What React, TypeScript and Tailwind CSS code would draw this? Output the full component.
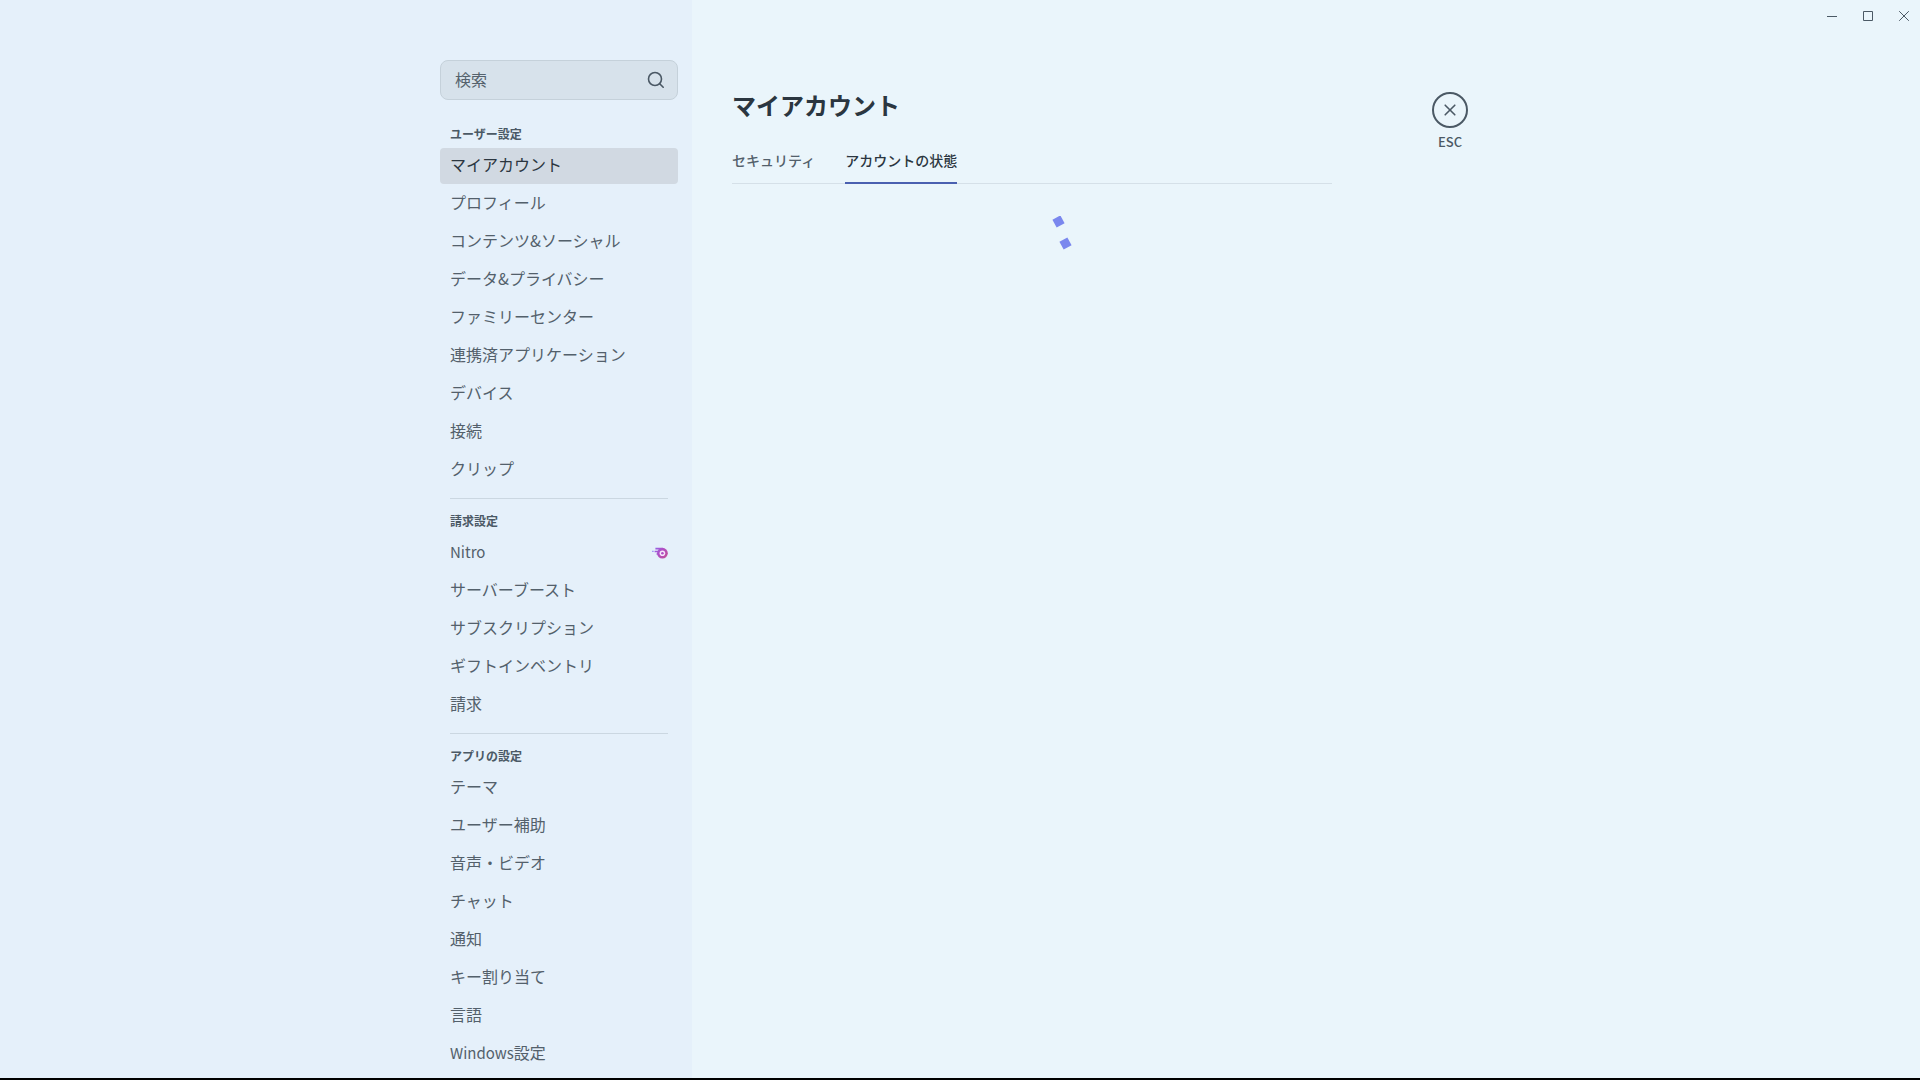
import { Fragment } from "react";

type NavItem = { label: string; latin?: string; selected?: boolean; nitro?: boolean };
type NavSection = { title: string; items: NavItem[] };

const sections: NavSection[] = [
  {
    title: "ユーザー設定",
    items: [
      { label: "マイアカウント", selected: true },
      { label: "プロフィール" },
      { label: "コンテンツ&ソーシャル" },
      { label: "データ&プライバシー" },
      { label: "ファミリーセンター" },
      { label: "連携済アプリケーション" },
      { label: "デバイス" },
      { label: "接続" },
      { label: "クリップ" },
    ],
  },
  {
    title: "請求設定",
    items: [
      { label: "", latin: "Nitro", nitro: true },
      { label: "サーバーブースト" },
      { label: "サブスクリプション" },
      { label: "ギフトインベントリ" },
      { label: "請求" },
    ],
  },
  {
    title: "アプリの設定",
    items: [
      { label: "テーマ" },
      { label: "ユーザー補助" },
      { label: "音声・ビデオ" },
      { label: "チャット" },
      { label: "通知" },
      { label: "キー割り当て" },
      { label: "言語" },
      { label: "設定", latin: "Windows" },
    ],
  },
];

function NitroIcon() {
  return (
    <svg className="h-3 w-4 shrink-0" viewBox="0 0 16 12" fill="none" aria-hidden="true">
      <defs>
        <linearGradient id="nitro" x1="0" y1="0" x2="16" y2="12" gradientUnits="userSpaceOnUse">
          <stop stopColor="#8a6cf5" />
          <stop offset="0.5" stopColor="#b04ec4" />
          <stop offset="1" stopColor="#c6508e" />
        </linearGradient>
      </defs>
      <circle cx="10.4" cy="6.2" r="5.4" fill="url(#nitro)" />
      <path fill="url(#nitro)" d="M3.4 .8H10.4V2.6H3.4ZM2.6 3.7H6.4V5.2H2.6ZM4.4 6.4H7V7.6H4.4Z" />
      <path fill="#8a6cf5" d="M.3 3.8H1.5V5H.3Z" />
      <circle cx="10.4" cy="6.2" r="2.8" fill="#f6e6fa" />
      <circle cx="10.4" cy="6.2" r="1.3" fill="#b04ec4" />
    </svg>
  );
}

function Sidebar() {
  return (
    <nav className="flex shrink-0 grow basis-60 justify-end overflow-hidden bg-[#e5f0fa] pt-15 pr-3.5">
      <div className="w-[238px]">
        <label className="flex h-10 items-center rounded-lg border border-[#c5d1da] bg-[#d7e2eb] pr-[11px] pl-3.5">
          <input
            type="text"
            aria-label="検索"
            placeholder="検索"
            className="min-w-0 flex-1 bg-transparent pb-0.5 text-base text-[#2f3b45] outline-none placeholder:text-[#55626d]"
          />
          <svg className="size-5 shrink-0" viewBox="0 0 20 20" fill="none" stroke="#4a5864" strokeWidth="1.6" strokeLinecap="round" aria-hidden="true">
            <circle cx="9" cy="9" r="6.5" />
            <path d="M13.7 13.7L17.2 17.2" />
          </svg>
        </label>
        <div className="pt-[25px]">
          {sections.map((section, index) => (
            <Fragment key={section.title}>
              {index > 0 && <hr className="mx-2.5 mt-2.5 mb-[13px] border-t border-[#cbd7e1]" />}
              <h2 className="mb-[5px] px-2.5 text-xs leading-[18px] font-bold text-[#4b5965]">{section.title}</h2>
              <ul className="flex flex-col gap-0.5">
                {section.items.map((item) => (
                  <li key={item.label + item.latin}>
                    <button
                      type="button"
                      className={
                        item.selected
                          ? "flex h-9 w-full items-center rounded-sm bg-[#d1d9e2] px-2.5 text-left text-base text-[#2b3640]"
                          : "flex h-9 w-full items-center rounded-sm px-2.5 text-left text-base text-[#53606b]"
                      }
                    >
                      <span className="flex-1 pb-1">
                        {item.latin && <span className="text-[15px]">{item.latin}</span>}
                        {item.label}
                      </span>
                      {item.nitro && <NitroIcon />}
                    </button>
                  </li>
                ))}
              </ul>
            </Fragment>
          ))}
        </div>
      </div>
    </nav>
  );
}

function WindowControls() {
  return (
    <div className="absolute top-0 -right-0.5 flex text-[#4b5965]">
      <button type="button" aria-label="最小化" className="flex h-8 w-9 items-center justify-center">
        <svg className="size-3" viewBox="0 0 12 12" fill="none" stroke="currentColor" aria-hidden="true">
          <path d="M1 6.5H11" />
        </svg>
      </button>
      <button type="button" aria-label="最大化" className="flex h-8 w-9 items-center justify-center">
        <svg className="size-3" viewBox="0 0 12 12" fill="none" stroke="currentColor" aria-hidden="true">
          <path d="M1.5 1.5H10.5V10.5H1.5Z" />
        </svg>
      </button>
      <button type="button" aria-label="ウィンドウを閉じる" className="flex h-8 w-9 items-center justify-center">
        <svg className="size-3" viewBox="0 0 12 12" fill="none" stroke="currentColor" aria-hidden="true">
          <path d="M1.2 1.2L10.8 10.8M10.8 1.2L1.2 10.8" />
        </svg>
      </button>
    </div>
  );
}

export default function App() {
  return (
    <div
      lang="ja"
      className="relative flex h-screen overflow-hidden border-b-2 border-black bg-[#eaf5fb] font-['Noto_Sans_CJK_JP',sans-serif]"
    >
      <Sidebar />
      <div className="flex shrink grow basis-[776px] gap-[100px] pl-10">
        <main className="w-full max-w-[600px] pt-[87px]">
          <h1 className="text-2xl leading-9 font-bold text-[#2b3640]">マイアカウント</h1>
          <div role="tablist" className="mt-5 flex gap-[30px] border-b border-[#d5e0e8]">
            <button type="button" role="tab" aria-selected="false" className="h-10 pb-1.5 text-sm font-medium text-[#53606b]">
              セキュリティ
            </button>
            <button
              type="button"
              role="tab"
              aria-selected="true"
              className="-mb-px h-[41px] border-b-2 border-[#4a60b0] pb-[5px] text-sm font-medium text-[#2b3640]"
            >
              アカウントの状態
            </button>
          </div>
          <div role="status" aria-label="読み込み中" className="flex justify-center pt-8">
            <svg className="h-9 w-20" viewBox="-20 0 80 36" fill="#7a87ee" aria-hidden="true">
              <rect x="42" y="1" width="9" height="9" transform="rotate(-28 46.5 5.5)" />
              <rect x="49" y="23" width="9" height="9" transform="rotate(-28 53.5 27.5)" />
            </svg>
          </div>
        </main>
        <div className="pt-23">
          <button type="button" className="flex flex-col items-center text-[#4b5965]">
            <span className="flex size-9 items-center justify-center rounded-full border-2 border-current">
              <svg className="size-3" viewBox="0 0 12 12" fill="none" stroke="currentColor" strokeWidth="1.6" strokeLinecap="round" aria-hidden="true">
                <path d="M1.2 1.2L10.8 10.8M10.8 1.2L1.2 10.8" />
              </svg>
            </span>
            <span className="mt-1 text-[13px] leading-5 font-medium">ESC</span>
          </button>
        </div>
      </div>
      <WindowControls />
    </div>
  );
}
